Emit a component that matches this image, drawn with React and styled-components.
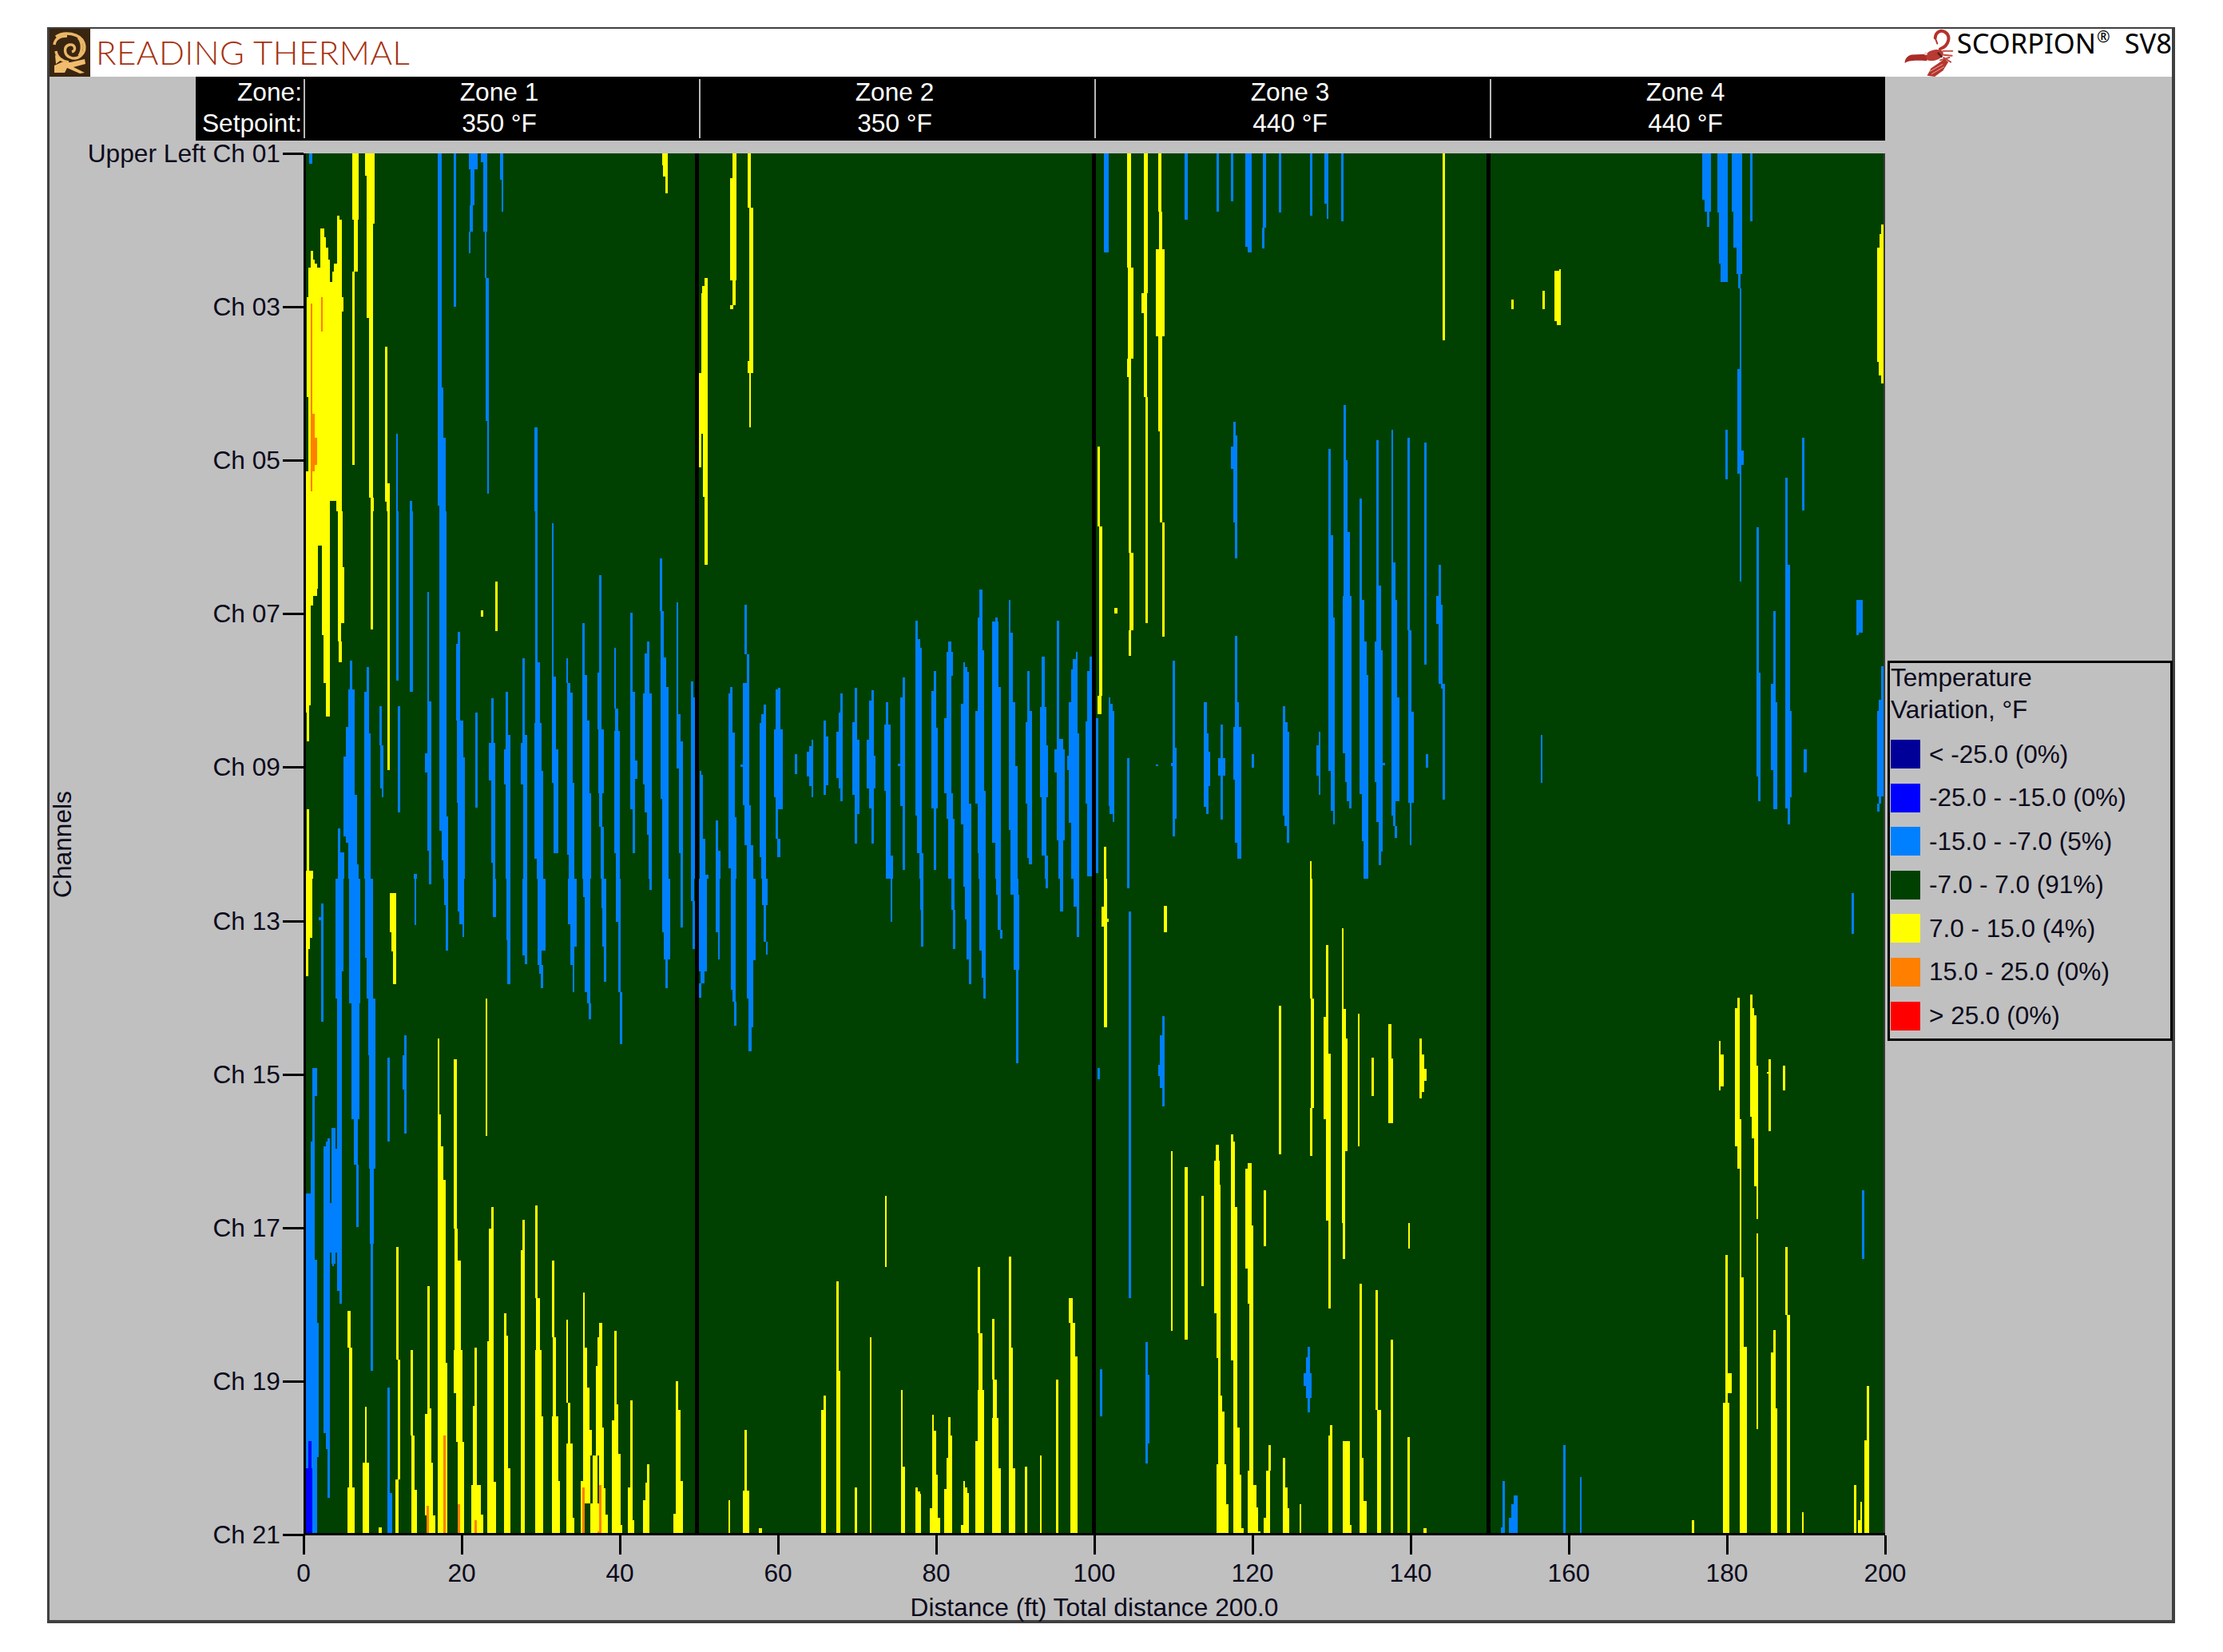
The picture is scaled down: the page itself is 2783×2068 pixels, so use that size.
import React from "react";
import styled, { createGlobalStyle } from "styled-components";

const GlobalStyle = createGlobalStyle`
  html, body { margin: 0; padding: 0; background: #fff; }
  #root { padding: 34px 0 0 59px; }
`;

const C = { green: "#004000", blue: "#0080FF", yellow: "#FFFF00", orange: "#FF8000", red: "#FF0000", navy: "#000099", pure: "#0000FF" };

/* Stripes are measured in the coordinates of reference crops: [left, right, top, bottom] */
const V = {
  a: [360, 180, 2.45, 3],
  b: [360, 640, 2.45, 3],
  c: [370, 1100, 2.45, 1.762],
  d: [1000, 250, 2.178, 1.845],
  e: [1000, 1100, 2.178, 1.762],
  f: [1700, 250, 2.24, 1.845],
  g: [1700, 1100, 2.24, 1.762],
};

const BLUE = {
  a: [[65,75,36,75],[460,472,36,915],[460,478,915,1105],[460,485,1105,1360],[465,485,1360,1380],[510,517,36,612],[555,582,36,95],[560,574,95,232],[558,568,232,330],[555,561,330,410],[594,612,36,68],[600,612,68,330],[604,610,330,505],[608,618,505,1040],[612,618,1040,1315],[652,662,36,135],[656,662,135,255],[758,766,1065,1380],[333,339,1090,1380],[376,383,1340,1380]],
  b: [[332,340,0,637],[376,384,0,677],[465,487,0,1145],[465,492,1145,1200],[472,492,1200,1310],[478,492,1310,1380],[428,434,303,715],[428,440,715,910],[422,440,910,980],[428,440,980,1275],[434,440,1275,1380],[522,530,452,497],[516,530,497,785],[520,538,785,925],[520,543,925,1095],[522,543,1095,1380],[575,582,755,1113],[625,632,702,870],[618,638,870,1010],[625,638,1010,1320],[630,638,1320,1380],[670,677,678,840],[663,683,895,1025],[670,683,840,895],[670,683,1025,1380],[720,728,552,840],[715,735,870,1025],[720,735,840,870],[722,735,1025,1380],[760,768,0,568],[760,773,568,795],[758,780,795,975],[758,785,975,1305],[765,785,1305,1380],[810,816,45,622],[810,824,622,895],[810,830,895,1020],[815,830,1020,1285],[855,861,552,645],[857,868,645,680],[857,874,680,1020],[857,880,1020,1290],[862,880,1290,1380],[905,912,420,615],[905,918,615,785],[905,925,785,1060],[905,932,1060,1380],[955,963,240,605],[950,963,605,820],[952,970,820,1060],[955,965,1060,1185],[960,970,1185,1380],[1001,1008,513,740],[1004,1015,740,825],[1002,1020,825,1285],[1008,1020,1285,1380],[1052,1059,380,678],[1052,1065,678,935],[1052,1072,935,1005],[1052,1065,1005,1120],[1058,1065,1120,1285],[1102,1109,490,535],[1096,1110,535,685],[1090,1116,685,1025],[1096,1116,1025,1130],[1102,1116,1130,1215],[1108,1116,1215,1380],[1141,1148,178,375],[1143,1153,375,550],[1143,1162,550,660],[1143,1168,660,1080],[1150,1168,1080,1380],[1192,1199,342,762],[1194,1205,762,865],[1194,1212,865,965],[1200,1212,965,1285],[1205,1212,1285,1380],[1237,1244,638,700],[1237,1250,700,1380],[1265,1270,975,990],[1265,1275,990,1230],[1265,1282,1230,1365],[1265,1290,1365,1380],[1314,1321,1160,1275],[1314,1327,1275,1380],[1358,1365,660,685],[1352,1365,685,830],[1352,1372,830,1150],[1352,1378,1150,1340],[1360,1378,1340,1380],[1402,1409,350,538],[1408,1416,538,645],[1396,1416,645,1105],[1402,1422,1105,1255],[1408,1428,1255,1380],[1390,1396,950,960],[1460,1467,725,762],[1452,1467,762,795],[1447,1467,795,1300],[1453,1467,1300,1380],[1504,1511,662,670],[1498,1511,670,820],[1492,1518,820,1075],[1498,1518,1075,1120],[1498,1505,1120,1230],[1503,1511,1230,1300],[1555,1562,912,988],[388,396,1362,1380],[155,162,1190,1280],[155,174,1280,1380],[192,199,560,670],[185,205,670,695],[187,205,695,810],[180,205,810,920],[172,205,920,1065],[172,212,1065,1220],[180,212,1220,1245],[185,212,1245,1325],[185,218,1325,1380],[242,249,585,678],[236,249,678,835],[236,255,835,1380],[282,288,732,880],[283,295,880,1040],[288,295,1040,1075],[338,345,732,1130]],
  c: [[78,85,55,315],[72,80,85,92],[122,148,0,205],[122,142,205,265],[128,142,265,910],[134,142,910,938],[165,198,0,275],[172,195,275,530],[180,190,530,630],[185,193,630,768],[212,238,0,175],[218,238,175,265],[222,245,265,390],[225,245,390,640],[228,240,640,805],[230,238,805,1085],[365,371,0,103],[408,416,0,12],[455,467,0,58],[460,467,58,158],[498,518,0,72],[503,518,72,100],[512,518,100,128],[606,614,0,85],[646,658,0,135],[650,658,135,232],[696,710,0,170],[702,710,170,188],[742,767,0,158],[742,755,158,190],[748,760,190,210],[753,760,210,242],[836,862,0,100],[842,862,100,150],[844,855,150,190],[850,856,190,250],[882,905,0,40],[888,905,40,250],[895,905,250,275],[900,906,275,310],[938,952,0,65],[942,952,65,150],[945,952,150,228],[983,997,0,95],[990,997,95,250],[995,1002,250,365],[1085,1092,0,25],[1124,1148,0,118],[1130,1148,118,178],[1135,1142,178,242],[1181,1188,0,108],[1212,1222,0,50],[1218,1225,50,155],[1238,1262,0,205],[1242,1255,205,230],[1238,1245,230,262],[1288,1302,0,118],[1296,1302,118,178],[1335,1350,0,245],[1340,1350,245,272],[1346,1353,272,325],[1385,1410,0,180],[1385,1403,180,265],[1390,1403,265,328],[1390,1398,328,380],[1430,1448,0,58],[1435,1442,58,140],[1442,1448,140,168],[28,60,695,1448],[60,66,840,1448],[66,72,980,1275],[46,60,580,695],[52,60,480,580],[52,66,418,480],[85,105,590,1222],[92,105,580,590],[98,105,572,580],[92,105,1222,1258],[97,105,1258,1365],[110,122,550,850],[122,130,595,825],[105,130,715,825],[112,118,850,855],[282,289,395,580],[334,340,345,390],[328,340,390,465],[334,340,465,562],[282,289,1122,1355],[282,296,1355,1448]],
  d: [[35,40,1247,1262],[28,40,1262,1275],[22,40,1275,1332],[28,40,1332,1355],[34,40,1355,1380],[68,74,1203,1240],[68,80,1240,1352],[68,74,1352,1375],[113,120,1140,1185],[108,120,1185,1228],[102,120,1228,1335],[108,120,1335,1360],[114,120,1360,1390],[152,159,1127,1207],[147,159,1207,1247],[147,165,1247,1375],[152,165,1375,1418],[152,159,1418,1487],[198,205,1132,1157],[192,205,1157,1247],[186,205,1247,1285],[186,210,1285,1360],[192,205,1360,1405],[198,205,1405,1487],[238,245,1160,1213],[232,250,1213,1365],[238,250,1365,1515],[238,256,1515,1568],[283,290,1103,1150],[277,290,1150,1400],[283,290,1400,1548],[270,277,1303,1308],[317,324,972,1015],[317,330,1015,1035],[317,335,1035,1423],[322,335,1423,1510],[328,340,1510,1568],[367,375,1088,1135],[362,375,1135,1220],[362,380,1220,1405],[367,375,1405,1548],[408,415,1020,1045],[403,420,1045,1100],[403,415,1100,1197],[396,415,1197,1370],[403,420,1370,1430],[408,425,1430,1568],[448,453,1068,1080],[448,460,1080,1090],[448,465,1090,1165],[442,465,1165,1395],[442,470,1395,1443],[448,470,1443,1568],[493,500,900,965],[487,500,965,1040],[487,505,1040,1180],[482,505,1180,1395],[487,510,1365,1510],[490,510,1510,1568],[535,542,965,975],[528,545,975,1125],[528,550,1125,1485],[535,550,1485,1568],[572,578,925,1000],[572,584,1000,1160],[572,590,1160,1308],[572,596,1308,1455],[578,596,1455,1568],[623,630,1088,1180],[623,635,1180,1207],[618,635,1207,1395],[623,635,1395,1520],[628,635,1520,1535],[663,670,1055,1172],[657,675,1172,1260],[657,680,1260,1380],[663,675,1380,1515],[670,680,1515,1568],[703,710,972,1245],[703,720,1245,1270],[697,725,1270,1322],[703,725,1322,1480],[708,720,1480,1568],[755,760,1045,1060],[748,760,1060,1085],[742,760,1085,1160],[737,760,1160,1232],[737,765,1232,1285],[732,765,1285,1318],[737,765,1318,1440],[742,765,1440,1568],[793,799,1055,1088],[787,799,1088,1205],[782,799,1205,1395],[787,799,1395,1562],[810,816,1197,1555],[845,850,1150,1165],[845,855,1165,1180],[845,860,1180,1400],[848,860,1400,1418],[855,860,1418,1437],[895,901,1290,1568],[973,980,1304,1308],[1020,1026,1065,1265],[1020,1030,1265,1430],[1014,1020,1300,1308],[1020,1026,1430,1470],[1105,1112,1160,1232],[1105,1117,1232,1275],[1105,1122,1275,1355],[1105,1117,1355,1403],[1110,1117,1403,1418],[1150,1156,1213,1290],[1144,1162,1290,1330],[1150,1156,1330,1432],[1190,1196,1008,1160],[1190,1200,1160,1218],[1185,1207,1218,1340],[1190,1207,1340,1485],[1195,1207,1485,1523],[1235,1241,1280,1312],[1320,1326,1170,1207],[1320,1332,1207,1228],[1320,1337,1228,1423],[1325,1337,1423,1447],[1330,1337,1447,1485],[1417,1423,1228,1260],[1411,1423,1260,1330],[1417,1423,1330,1375],[1445,1451,575,775],[1445,1456,775,965],[1445,1462,965,1320],[1450,1462,1320,1412],[1456,1462,1412,1442],[1485,1491,475,602],[1486,1497,602,767],[1486,1502,767,915],[1484,1508,915,1278],[1490,1508,1278,1345],[1495,1508,1345,1390],[1500,1508,1390,1405],[1530,1536,690,925],[1530,1542,925,1020],[1530,1548,1020,1098],[1530,1554,1098,1372],[1535,1554,1372,1482],[1540,1554,1482,1568],[1185,1192,513,545],[1185,1196,545,570],[1178,1196,570,622],[1185,1196,622,745],[1190,1196,745,828],[833,845,-107,122],[1053,1060,-107,46],[1140,1146,-107,27],[1178,1185,-107,3],[1217,1236,-107,108],[1223,1236,108,122],[1265,1275,-107,65],[1264,1270,65,113],[1309,1315,-107,30],[1394,1400,-107,37],[1433,1445,-107,10],[1439,1445,10,45],[1479,1485,-107,50]],
  e: [[250,255,0,95],[330,340,0,68],[334,340,68,150],[415,425,0,68],[420,426,68,155],[448,470,0,18],[453,470,18,90],[458,470,90,178],[463,470,178,233],[492,510,0,158],[498,510,158,218],[503,510,218,265],[538,550,0,35],[542,552,35,112],[548,555,112,132],[578,600,0,35],[585,602,35,200],[593,600,200,407],[674,680,0,22],[712,720,0,72],[750,765,0,62],[758,765,62,128],[895,901,0,22],[900,906,72,925],[815,822,418,443],[990,997,303,345],[985,997,345,410],[980,997,410,435],[985,997,435,462],[990,997,462,503],[822,828,1082,1186],[945,951,1022,1095],[945,957,1095,1245],[945,951,1245,1290],[1387,1393,1032,1055],[1382,1393,1055,1090],[1376,1398,1090,1118],[1382,1398,1118,1145],[1387,1393,1145,1177]],
  f: [[966,990,-107,0],[973,990,0,28],[978,985,28,62],[1008,1036,-107,30],[1012,1036,30,148],[1018,1036,148,190],[1048,1078,-107,28],[1053,1078,28,110],[1062,1078,110,172],[1067,1073,172,205],[1100,1106,-107,50],[1070,1076,205,392],[1065,1076,392,580],[1065,1083,580,612],[1065,1076,612,632],[1071,1076,632,882],[1030,1036,532,645],[1246,1252,550,718],[1199,1205,642,843],[1199,1212,843,1180],[1199,1217,1180,1380],[1199,1212,1380,1405],[1205,1212,1405,1443],[1118,1124,757,1092],[1118,1130,1092,1332],[1123,1130,1332,1390],[1165,1171,950,1118],[1158,1171,1118,1160],[1158,1177,1160,1318],[1165,1177,1318,1408],[1251,1258,1270,1322],[1397,1415,925,1000],[1397,1405,1000,1006],[1467,1473,1078,1155],[1461,1473,1155,1180],[1455,1473,1180,1378],[1461,1468,1378,1395],[1455,1462,1395,1413],[512,518,1237,1347],[52,58,555,892],[52,64,892,1020],[46,64,1020,1040],[46,70,1040,1345],[52,70,1345,1438],[58,70,1438,1505],[58,64,1505,1537],[70,76,1300,1306],[93,99,532,838],[93,105,838,925],[93,110,925,1150],[93,116,1150,1390],[93,106,1390,1422],[98,106,1422,1447],[104,110,1447,1475],[139,146,550,995],[141,150,995,1183],[141,157,1183,1393],[145,150,1393,1490],[185,192,560,1073],[226,232,843,915],[220,232,915,935],[220,238,935,980],[226,238,980,1118],[232,244,1118,1130],[238,244,1130,1385],[190,197,1280,1312]],
  g: [[1385,1391,32,122],[1414,1420,687,838],[406,412,1328,1430],[400,412,1430,1448],[436,448,1360,1380],[430,448,1380,1410],[424,448,1410,1448],[576,582,1250,1448],[622,628,1320,1448]],
};

const YELLOW = {
  a: [[64,166,520,1340],[64,130,1340,1380],[150,166,1340,1380],[60,172,575,630],[60,64,630,950],[56,64,1230,1380],[64,70,465,520],[70,78,403,520],[78,84,435,520],[84,90,450,520],[90,100,465,520],[100,112,318,520],[112,118,350,520],[118,124,390,520],[124,130,435,520],[136,142,480,520],[142,152,450,520],[152,160,270,520],[160,166,285,520],[198,217,36,285],[203,215,285,480],[198,207,480,1205],[238,268,36,120],[243,268,120,300],[243,262,300,655],[249,262,655,1330],[254,264,1330,1380],[300,307,762,1275],[300,314,1275,1345],[305,314,1345,1380],[1148,1167,36,80],[1152,1167,80,122],[1160,1167,122,185],[1365,1377,36,130],[1358,1378,130,512],[1365,1375,512,605],[1358,1368,605,622],[1410,1422,36,240],[1415,1428,240,815],[1410,1428,815,860],[1415,1422,860,1065],[1280,1288,505,535],[1272,1288,535,560],[1268,1288,560,862],[1262,1288,862,1090],[1262,1270,1090,1215],[1275,1288,1090,1325],[1280,1288,1325,1380]],
  b: [[52,97,0,130],[97,105,0,130],[105,130,0,465],[52,92,130,290],[110,130,465,645],[118,130,645,770],[52,78,290,355],[78,90,290,318],[52,72,355,730],[52,65,730,755],[58,65,755,865],[155,168,0,210],[155,174,210,420],[155,165,420,490],[158,167,490,568],[255,263,0,443],[306,314,0,972],[593,601,372,397],[637,645,265,450],[1280,1288,0,200],[58,65,1120,1350],[52,78,1350,1380]],
  c: [[25,52,0,130],[32,45,130,155],[32,40,155,215],[290,308,32,118],[295,308,118,160],[300,308,160,232],[582,588,265,567],[160,168,953,1035],[165,174,1035,1342],[160,182,1342,1448],[212,219,1165,1288],[205,225,1288,1448],[256,265,1430,1448],[308,315,812,1060],[313,321,1060,1325],[306,316,1325,1448],[352,359,1040,1228],[355,365,1228,1348],[355,372,1348,1448],[404,411,898,1168],[404,416,1168,1180],[398,416,1180,1288],[398,422,1288,1405],[402,428,1405,1448],[435,442,352,520],[436,447,520,590],[436,454,590,665],[436,460,665,1068],[436,466,1068,1448],[486,494,398,772],[488,498,772,842],[488,506,842,1040],[486,512,1040,1135],[492,512,1135,1242],[498,518,1242,1448],[550,557,1035,1163],[544,557,1163,1338],[538,568,1338,1402],[538,576,1402,1448],[600,607,724,772],[594,607,772,1020],[588,607,1020,1330],[588,614,1330,1448],[640,647,958,1008],[640,652,1008,1300],[640,658,1300,1448],[697,703,752,820],[690,703,820,1448],[735,742,720,925],[738,750,925,1040],[735,755,1040,1185],[735,760,1185,1448],[786,793,843,1012],[788,799,1012,1186],[786,806,1186,1328],[786,810,1328,1448],[830,836,972,1155],[835,843,1155,1245],[830,850,1245,1410],[830,856,1410,1448],[882,888,912,1035],[888,895,1035,1122],[888,902,1122,1215],[888,908,1215,1272],[875,888,1328,1448],[882,888,1035,1328],[888,905,1215,1378],[905,942,1378,1448],[912,925,1272,1378],[920,930,1075,1272],[925,935,1012,1210],[932,940,980,1210],[932,945,1210,1345],[932,950,1345,1402],[932,958,1402,1448],[977,984,998,1160],[977,990,1160,1195],[970,990,1195,1268],[970,996,1268,1425],[970,1002,1425,1448],[1027,1034,1150,1342],[1020,1034,1342,1415],[1020,1040,1415,1448],[1078,1085,1292,1332],[1072,1085,1332,1370],[1065,1085,1370,1448],[1167,1174,1108,1172],[1167,1180,1172,1328],[1167,1188,1328,1400],[1160,1188,1400,1448],[1327,1334,1370,1448],[1378,1385,1215,1350],[1372,1392,1350,1448],[1422,1430,1432,1448]],
  d: [[895,907,-107,157],[897,912,157,368],[895,906,368,410],[900,906,410,815],[902,912,815,995],[900,906,995,1053],[940,952,-107,215],[934,950,215,262],[940,950,262,455],[945,952,455,978],[980,988,-107,28],[982,992,28,115],[974,998,115,315],[980,992,315,535],[985,992,535,745],[990,998,745,1010],[815,822,570,755],[818,828,755,1145],[815,825,1145,1188],[860,868,943,955],[832,838,1495,1568],[1393,1399,1528,1568]],
  e: [[832,840,0,62],[826,840,62,105],[838,846,88,95],[832,840,105,328],[996,1003,60,118],[1393,1400,0,265],[1396,1405,265,505],[1393,1400,505,612],[1438,1444,146,305],[1432,1444,305,385],[1432,1450,385,530],[1438,1450,530,755],[1443,1450,755,948],[1480,1486,110,288],[1482,1492,288,352],[1482,1497,352,600],[1482,1490,600,760],[1484,1490,760,838],[1524,1530,298,590],[1562,1568,395,480],[1308,1315,280,608],[1268,1275,687,810],[1014,1020,600,998],[1053,1060,636,1017],[1098,1105,700,898],[1138,1145,587,622],[1132,1148,622,675],[1132,1150,675,958],[1140,1150,958,1057],[1143,1150,1057,1140],[1143,1155,1140,1175],[1143,1161,1175,1292],[1140,1165,1292,1380],[1140,1172,1380,1448],[1178,1184,563,580],[1178,1190,580,725],[1178,1196,725,1063],[1185,1196,1063,1210],[1185,1202,1210,1315],[1185,1207,1315,1432],[1185,1213,1432,1448],[1225,1235,628,640],[1218,1235,640,765],[1218,1240,765,860],[1223,1240,860,938],[1228,1240,938,1305],[1223,1240,1305,1338],[1223,1247,1338,1387],[1223,1252,1387,1440],[1223,1258,1440,1448],[1280,1287,1250,1305],[1274,1285,1305,1410],[1268,1285,1410,1448],[1320,1326,1278,1342],[1320,1332,1342,1388],[1320,1337,1388,1448],[1365,1371,1380,1448],[1448,1455,1205,1228],[1444,1455,1228,1448],[1484,1502,1240,1425],[1484,1507,1425,1448],[1530,1536,893,1278],[1530,1540,1278,1372],[1530,1548,1372,1448],[68,74,1140,1172],[62,74,1172,1448],[102,108,888,1085],[102,114,1085,1448],[152,159,1342,1448],[193,199,1012,1448],[235,239,700,857],[278,284,1127,1297],[278,290,1297,1448],[318,325,1342,1352],[318,330,1352,1357],[318,334,1357,1448],[363,369,1182,1218],[363,375,1218,1315],[363,380,1315,1388],[357,380,1388,1410],[357,386,1410,1448],[408,414,1187,1228],[408,419,1228,1277],[403,419,1277,1347],[396,419,1347,1448],[448,454,1328,1342],[448,460,1342,1355],[448,465,1355,1425],[442,465,1425,1448],[488,494,856,1002],[490,500,1002,1127],[488,505,1127,1240],[482,505,1240,1448],[528,534,970,1105],[530,540,1105,1190],[528,545,1190,1300],[528,550,1300,1448],[573,579,833,1035],[573,584,1035,1300],[573,590,1300,1448],[617,623,1297,1448],[657,663,1273,1448],[702,708,1105,1448],[736,748,925,980],[740,754,980,1053],[740,760,1053,1448]],
  f: [[237,244,-107,325],[430,437,230,253],[517,524,210,253],[552,570,165,280],[558,570,280,290],[565,570,160,165],[1455,1473,110,375],[1462,1473,80,110],[1467,1473,57,80],[1460,1473,375,405],[1467,1473,405,425]],
  g: [[86,93,320,397],[86,99,397,540],[173,180,352,388],[173,186,388,420],[173,192,420,445],[173,186,445,470],[173,180,470,485],[140,146,760,815],[50,57,907,1172],[53,64,1172,1448],[92,99,1017,1448],[138,146,1232,1448],[184,192,1432,1448],[936,943,1415,1448],[1030,1036,830,1155],[1024,1042,1155,1448],[1036,1048,1090,1135],[1012,1018,357,467],[1018,1025,388,458],[1064,1071,262,285],[1058,1071,285,590],[1064,1076,530,640],[1070,1076,640,880],[1070,1083,880,1032],[1070,1090,1032,1448],[1100,1106,256,285],[1100,1112,285,302],[1100,1118,302,525],[1105,1118,525,572],[1110,1118,572,678],[1117,1123,678,750],[1118,1123,412,678],[1117,1123,783,1214],[1152,1158,398,557],[1147,1152,426,430],[1192,1198,412,467],[1199,1205,812,962],[1202,1212,962,1448],[1165,1171,995,1045],[1158,1171,1045,1168],[1158,1177,1168,1448],[1245,1251,1397,1448],[1391,1398,1338,1448],[1402,1414,1415,1448],[1408,1414,1375,1415],[1427,1433,1118,1238],[1420,1433,1238,1448]],
};

const ORANGE = {
  a: [[70,76,600,1305],[102,108,575,705],[76,84,1015,1230],[84,90,1105,1205]],
  c: [[403,410,1383,1448],[454,460,1228,1448],[498,505,1380,1448],[550,556,1415,1448],[880,888,1342,1448],[932,938,1338,1448],[925,935,1440,1448]],
};

const PURE = { c: [[32,52,1300,1448],[40,48,1240,1300]] };

const toPath = (groups) =>
  Object.entries(groups)
    .flatMap(([key, rects]) => {
      const [ox, oy, sx, sy] = V[key];
      return rects.map(([l, r, t, b]) => {
        const x0 = Math.round(ox + l / sx);
        const x1 = Math.max(x0 + 2, Math.round(ox + r / sx));
        const y0 = Math.round(oy + t / sy);
        const y1 = Math.round(oy + b / sy);
        return `M${x0} ${y0}H${x1}V${y1}H${x0}Z`;
      });
    })
    .join("");

const ZONES = [
  ["Zone 1", "350 °F"],
  ["Zone 2", "350 °F"],
  ["Zone 3", "440 °F"],
  ["Zone 4", "440 °F"],
];
const CHANNELS = ["Upper Left Ch 01", "Ch 03", "Ch 05", "Ch 07", "Ch 09", "Ch 13", "Ch 15", "Ch 17", "Ch 19", "Ch 21"];
const DISTANCES = [0, 20, 40, 60, 80, 100, 120, 140, 160, 180, 200];
const LEGEND = [
  [C.navy, "< -25.0 (0%)"],
  [C.pure, "-25.0 - -15.0 (0%)"],
  [C.blue, "-15.0 - -7.0 (5%)"],
  [C.green, "-7.0 - 7.0 (91%)"],
  [C.yellow, "7.0 - 15.0 (4%)"],
  [C.orange, "15.0 - 25.0 (0%)"],
  [C.red, "> 25.0 (0%)"],
];

const Frame = styled.div`
  box-sizing: border-box;
  width: 2664px;
  height: 1998px;
  border-style: solid;
  border-color: #404040;
  border-width: 2px 4px 4px 3px;
  background: #c0c0c0;
  font-family: "Liberation Sans", Arial, sans-serif;
  font-size: 31.7px;
  color: #0c0a1c;
`;
const Header = styled.header`
  display: flex;
  justify-content: space-between;
  align-items: flex-start;
  height: 60px;
  background: #fff;
`;
const Brand = styled.div`
  display: flex;
  align-items: center;
  gap: 7px;
  height: 100%;
`;
const BrandName = styled.span`
  font-family: Lato, sans-serif;
  font-weight: 300;
  font-size: 42px;
  letter-spacing: 0.5px;
  line-height: 56px;
  margin-top: -3px;
  color: #a5310f;
`;
const Product = styled.div`
  display: flex;
  align-items: flex-start;
  height: 100%;
  flex: none;
`;
const ProductName = styled.span`
  font-family: "Noto Sans", sans-serif;
  font-size: 34.5px;
  line-height: 36px;
  color: #000;
  margin-left: 3px;
  white-space: pre;
`;
const Registered = styled.sup`
  font-size: 20px;
  line-height: 0;
  vertical-align: 14px;
  margin: 0 18px 0 1px;
`;
const Sheet = styled.div`
  display: grid;
  grid-template-columns: 318px 1980px 1fr;
  grid-template-rows: 80px 16px 1730px 1fr;
`;
const ZoneBar = styled.div`
  grid-column: 1 / span 2;
  grid-row: 1;
  margin-left: 183px;
  display: flex;
  background: #000;
  color: #fff;
  line-height: 39px;
`;
const ZoneLabels = styled.div`
  width: 135px;
  box-sizing: border-box;
  padding-right: 2px;
  text-align: right;
  white-space: nowrap;
`;
const ZoneCell = styled.div`
  flex: 1;
  padding-right: 7px;
  text-align: center;
  border-left: 2px solid #b8b8b8;
  margin: 3px 0;
  line-height: 39px;
  & > div:first-child { margin-top: -3px; }
`;
const ChannelAxis = styled.div`
  grid-column: 1;
  grid-row: 3;
  display: flex;
  margin: -20px 0;
`;
const AxisTitle = styled.div`
  width: 32px;
  flex: none;
  display: flex;
  align-items: center;
  justify-content: center;
  writing-mode: vertical-rl;
  transform: rotate(180deg);
  white-space: nowrap;
`;
const ChannelList = styled.div`
  flex: 1;
  display: flex;
  flex-direction: column;
  justify-content: space-between;
`;
const ChannelRow = styled.div`
  height: 40px;
  display: flex;
  align-items: center;
  justify-content: flex-end;
  gap: 3px;
  white-space: nowrap;
`;
const ChannelTick = styled.span`
  width: 26px;
  height: 3px;
  background: #000;
  flex: none;
`;
const Plot = styled.svg`
  grid-column: 2;
  grid-row: 3;
  display: block;
  width: 1980px;
  height: 1730px;
  background: ${C.green};
  shape-rendering: crispEdges;
`;
const LegendBox = styled.aside`
  grid-column: 3;
  grid-row: 3;
  align-self: start;
  box-sizing: border-box;
  height: 476px;
  margin: 635px -1px 0 3px;
  padding: 0 0 0 1px;
  border: 3px solid #000;
`;
const LegendTitle = styled.div`
  font-size: 31.5px;
  line-height: 40px;
  margin: -2px 0 18px;
`;
const LegendList = styled.div`
  display: flex;
  flex-direction: column;
  gap: 18.6px;
`;
const LegendRow = styled.div`
  display: flex;
  align-items: center;
  gap: 11px;
  height: 36px;
  font-size: 31.5px;
  white-space: nowrap;
`;
const Swatch = styled.span`
  width: 37px;
  height: 36px;
  flex: none;
  background: ${(p) => p.$color};
`;
const XAxis = styled.div`
  grid-column: 2;
  grid-row: 4;
`;
const XTicks = styled.div`
  display: flex;
  justify-content: space-between;
  margin: 0 -40px;
`;
const XCell = styled.div`
  width: 80px;
  display: flex;
  flex-direction: column;
  align-items: center;
  line-height: 36px;
`;
const XTick = styled.span`
  width: 3px;
  height: 24px;
  background: #000;
  margin-bottom: 5px;
`;
const XTitle = styled.div`
  text-align: center;
  line-height: 36px;
  margin-top: 7px;
`;

const Logo = () => (
  <svg width="51" height="60" viewBox="0 0 51 60" style={{ flex: "none" }}>
    <rect width="51" height="60" fill="#3a2510" />
    <g fill="none" stroke="#e9b768" strokeWidth="3.4">
      <path d="M8 10C18 3 38 5 43 18C47 30 36 40 26 36C18 33 17 22 25 20C32 19 34 27 28 29" />
      <path d="M6 20C7 12 14 9 22 9" />
      <path d="M8 28C9 36 16 41 24 42" />
      <path d="M36 11C41 16 42 26 37 34" />
    </g>
    <path d="M7 33L16 38L8 44Z M6 46L15 42L26 42L44 38L45 44L30 48L44 55L38 56L22 49L19 55L6 55Z" fill="#f0bd6e" />
  </svg>
);

const Scorpion = () => (
  <svg width="64" height="60" viewBox="245 105 195 183" style={{ flex: "none" }}>
    <g fill="none" stroke="#b5322c" strokeLinecap="round">
      <path d="M385 182C420 170 426 132 404 118C388 108 368 116 366 140" strokeWidth="12" />
      <path d="M366 140L374 162" strokeWidth="6" />
      <path d="M395 190L432 190M398 205L430 208M398 215L425 232M385 225L420 215" strokeWidth="6" stroke="#c24b40" />
    </g>
    <ellipse cx="362" cy="206" rx="36" ry="20" transform="rotate(-14 362 206)" fill="#b83a32" />
    <path d="M330 202L276 204C262 206 249 220 250 236C262 228 282 224 335 228Z" fill="#a92c28" />
    <path d="M402 220L350 256L335 284L364 288L396 264L416 232Z" fill="#b5362f" />
    <path d="M345 268L395 240M352 278L400 250" stroke="#e8a9a0" strokeWidth="3" />
    <circle cx="330" cy="200" r="6" fill="#efd8d2" />
    <path d="M376 196L392 214" stroke="#57201c" strokeWidth="8" />
  </svg>
);

export default function App() {
  return (
    <>
      <GlobalStyle />
      <Frame>
        <Header>
          <Brand>
            <Logo />
            <BrandName>READING THERMAL</BrandName>
          </Brand>
          <Product>
            <Scorpion />
            <ProductName>
              SCORPION<Registered>®</Registered>SV8
            </ProductName>
          </Product>
        </Header>
        <Sheet>
          <ZoneBar>
            <ZoneLabels>
              <div>Zone:</div>
              <div>Setpoint:</div>
            </ZoneLabels>
            {ZONES.map(([zone, setpoint]) => (
              <ZoneCell key={zone}>
                <div>{zone}</div>
                <div>{setpoint}</div>
              </ZoneCell>
            ))}
          </ZoneBar>
          <ChannelAxis>
            <AxisTitle>Channels</AxisTitle>
            <ChannelList>
              {CHANNELS.map((c) => (
                <ChannelRow key={c}>
                  {c}
                  <ChannelTick />
                </ChannelRow>
              ))}
            </ChannelList>
          </ChannelAxis>
          <Plot viewBox="380 192 1980 1730" preserveAspectRatio="none">
            <path d={toPath(BLUE)} fill={C.blue} />
            <path d={toPath(YELLOW)} fill={C.yellow} />
            <path d={toPath(ORANGE)} fill={C.orange} />
            <path d={toPath(PURE)} fill={C.pure} />
            <rect x="870" y="192" width="5" height="1730" fill="#000" />
            <rect x="1367" y="192" width="5" height="1730" fill="#000" />
            <rect x="1861" y="192" width="5" height="1730" fill="#000" />
            <rect x="380" y="192" width="3" height="1730" fill="#000" />
            <rect x="2358" y="192" width="2" height="1730" fill="#3a3a3a" />
            <rect x="380" y="1919" width="1980" height="3" fill="#000" />
          </Plot>
          <LegendBox>
            <LegendTitle>
              Temperature
              <br />
              Variation, °F
            </LegendTitle>
            <LegendList>
              {LEGEND.map(([color, label]) => (
                <LegendRow key={label}>
                  <Swatch $color={color} />
                  {label}
                </LegendRow>
              ))}
            </LegendList>
          </LegendBox>
          <XAxis>
            <XTicks>
              {DISTANCES.map((d) => (
                <XCell key={d}>
                  <XTick />
                  {d}
                </XCell>
              ))}
            </XTicks>
            <XTitle>Distance (ft) Total distance 200.0</XTitle>
          </XAxis>
        </Sheet>
      </Frame>
    </>
  );
}
